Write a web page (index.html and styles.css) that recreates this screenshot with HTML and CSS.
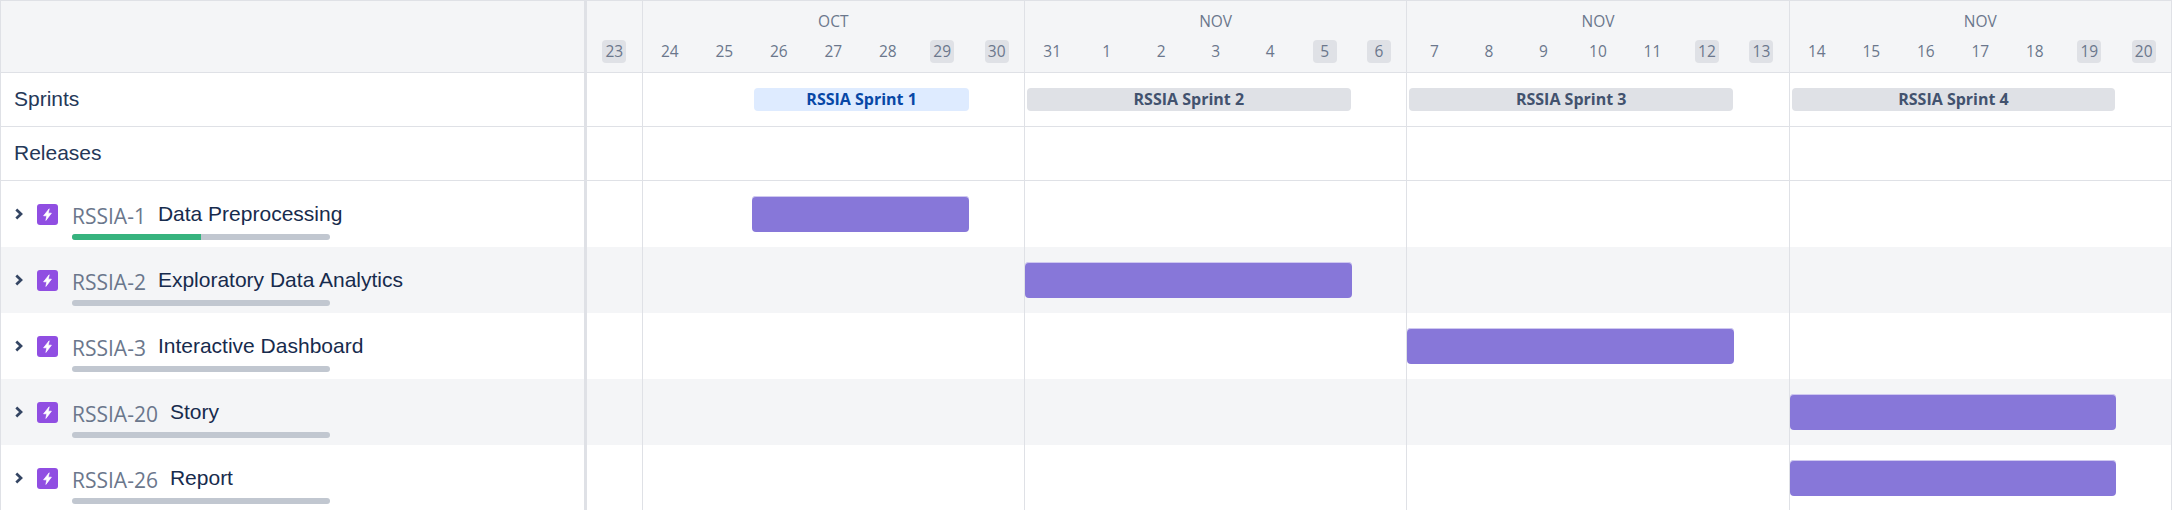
FILE: index.html
```html
<!DOCTYPE html>
<html lang="en">
<head>
    <meta charset="UTF-8">
    <title>Timeline</title>
    <link rel="stylesheet" href="styles.css">
</head>
<body>
    <svg class="defs" width="0" height="0">
        <symbol id="epic" viewBox="0 0 21 21">
            <rect width="21" height="21" rx="3" fill="#904ee2"/>
            <path d="M12.2 4.8 6.6 11.8h3.2L8.9 16.4l5.5-7.2h-3.2z" fill="#fff" stroke="#fff" stroke-width=".7" stroke-linejoin="round"/>
        </symbol>
        <symbol id="chevron" viewBox="0 0 10 12">
            <path d="M2.3 1.6 7 6 2.3 10.4" fill="none" stroke="#344563" stroke-width="2.7"/>
        </symbol>
    </svg>

    <div class="roadmap">
        <!-- Header -->
        <div class="row row-head">
            <div class="side"></div>
            <div class="track">
                <div class="cell first">
                    <div class="month"></div>
                    <div class="days"><span class="day off">23</span></div>
                </div>
                <div class="cell week">
                    <div class="month">OCT</div>
                    <div class="days">
                        <span class="day">24</span><span class="day">25</span><span class="day">26</span><span class="day">27</span><span class="day">28</span><span class="day off">29</span><span class="day off">30</span>
                    </div>
                </div>
                <div class="cell week">
                    <div class="month">NOV</div>
                    <div class="days">
                        <span class="day">31</span><span class="day">1</span><span class="day">2</span><span class="day">3</span><span class="day">4</span><span class="day off">5</span><span class="day off">6</span>
                    </div>
                </div>
                <div class="cell week">
                    <div class="month">NOV</div>
                    <div class="days">
                        <span class="day">7</span><span class="day">8</span><span class="day">9</span><span class="day">10</span><span class="day">11</span><span class="day off">12</span><span class="day off">13</span>
                    </div>
                </div>
                <div class="cell week">
                    <div class="month">NOV</div>
                    <div class="days">
                        <span class="day">14</span><span class="day">15</span><span class="day">16</span><span class="day">17</span><span class="day">18</span><span class="day off">19</span><span class="day off">20</span>
                    </div>
                </div>
            </div>
        </div>

        <!-- Sprints -->
        <div class="row row-meta">
            <div class="side">Sprints</div>
            <div class="track">
                <div class="cell first"></div><div class="cell week"></div><div class="cell week"></div><div class="cell week"></div><div class="cell week"></div>
                <div class="sprint active s1">RSSIA Sprint 1</div>
                <div class="sprint s2">RSSIA Sprint 2</div>
                <div class="sprint s3">RSSIA Sprint 3</div>
                <div class="sprint s4">RSSIA Sprint 4</div>
            </div>
        </div>

        <!-- Releases -->
        <div class="row row-meta">
            <div class="side">Releases</div>
            <div class="track">
                <div class="cell first"></div><div class="cell week"></div><div class="cell week"></div><div class="cell week"></div><div class="cell week"></div>
            </div>
        </div>

        <!-- Epics -->
        <div class="row row-epic">
            <div class="side">
                <svg class="chevron"><use href="#chevron"/></svg>
                <svg class="icon"><use href="#epic"/></svg>
                <div class="info">
                    <div class="names"><span class="key">RSSIA-1</span><span class="title">Data Preprocessing</span></div>
                    <div class="progress"><div class="done" style="width: 50%"></div></div>
                </div>
            </div>
            <div class="track">
                <div class="cell first"></div><div class="cell week"></div><div class="cell week"></div><div class="cell week"></div><div class="cell week"></div>
                <div class="bar b1"></div>
            </div>
        </div>

        <div class="row row-epic alt">
            <div class="side">
                <svg class="chevron"><use href="#chevron"/></svg>
                <svg class="icon"><use href="#epic"/></svg>
                <div class="info">
                    <div class="names"><span class="key">RSSIA-2</span><span class="title">Exploratory Data Analytics</span></div>
                    <div class="progress"></div>
                </div>
            </div>
            <div class="track">
                <div class="cell first"></div><div class="cell week"></div><div class="cell week"></div><div class="cell week"></div><div class="cell week"></div>
                <div class="bar b2"></div>
            </div>
        </div>

        <div class="row row-epic">
            <div class="side">
                <svg class="chevron"><use href="#chevron"/></svg>
                <svg class="icon"><use href="#epic"/></svg>
                <div class="info">
                    <div class="names"><span class="key">RSSIA-3</span><span class="title">Interactive Dashboard</span></div>
                    <div class="progress"></div>
                </div>
            </div>
            <div class="track">
                <div class="cell first"></div><div class="cell week"></div><div class="cell week"></div><div class="cell week"></div><div class="cell week"></div>
                <div class="bar b3"></div>
            </div>
        </div>

        <div class="row row-epic alt">
            <div class="side">
                <svg class="chevron"><use href="#chevron"/></svg>
                <svg class="icon"><use href="#epic"/></svg>
                <div class="info">
                    <div class="names"><span class="key">RSSIA-20</span><span class="title">Story</span></div>
                    <div class="progress"></div>
                </div>
            </div>
            <div class="track">
                <div class="cell first"></div><div class="cell week"></div><div class="cell week"></div><div class="cell week"></div><div class="cell week"></div>
                <div class="bar b4"></div>
            </div>
        </div>

        <div class="row row-epic">
            <div class="side">
                <svg class="chevron"><use href="#chevron"/></svg>
                <svg class="icon"><use href="#epic"/></svg>
                <div class="info">
                    <div class="names"><span class="key">RSSIA-26</span><span class="title">Report</span></div>
                    <div class="progress"></div>
                </div>
            </div>
            <div class="track">
                <div class="cell first"></div><div class="cell week"></div><div class="cell week"></div><div class="cell week"></div><div class="cell week"></div>
                <div class="bar b4"></div>
            </div>
        </div>
    </div>
</body>
</html>
```

FILE: styles.css
```css
html, body {
    margin: 0;
    padding: 0;
    height: 510px;
    overflow: hidden;
    background: #fff;
}

.defs {
    display: block;
    height: 0;
}

.roadmap {
    box-sizing: border-box;
    height: 510px;
    overflow: hidden;
    border-top: 1px solid #dfe1e6;
    border-left: 1px solid #dfe1e6;
    border-right: 1px solid #dfe1e6;
    font-family: "Open Sans", sans-serif;
    color: #172b4d;
}

.row {
    display: flex;
    box-sizing: border-box;
}

.side {
    box-sizing: border-box;
    flex: 0 0 583px;
    display: flex;
    align-items: center;
}

.track {
    flex: 1;
    min-width: 0;
    display: grid;
    grid-template-columns: repeat(29, 1fr);
    grid-template-rows: 1fr;
    border-left: 3px solid #dfe1e6;
}

.cell {
    box-sizing: border-box;
    grid-row: 1;
    min-width: 0;
}

.cell:nth-child(1) { grid-column: 1 / span 1; }
.cell:nth-child(2) { grid-column: 2 / span 7; }
.cell:nth-child(3) { grid-column: 9 / span 7; }
.cell:nth-child(4) { grid-column: 16 / span 7; }
.cell:nth-child(5) { grid-column: 23 / span 7; }

.cell.week {
    border-left: 1px solid #dfe1e6;
}

/* Header */
.row-head {
    height: 72px;
    background: #f4f5f7;
    border-bottom: 1px solid #dfe1e6;
}

.row-head .cell {
    display: flex;
    flex-direction: column;
}

.month {
    height: 39px;
    padding-top: 10px;
    box-sizing: border-box;
    line-height: 20px;
    font-size: 15.5px;
    color: #6b778c;
    text-align: center;
}

.days {
    display: grid;
    grid-auto-flow: column;
    grid-auto-columns: 1fr;
    justify-items: center;
}

.day {
    width: 24px;
    height: 23px;
    line-height: 23px;
    border-radius: 4px;
    font-size: 15.5px;
    color: #6b778c;
    text-align: center;
}

.day.off {
    background: #dfe1e6;
}

/* Sprints and releases */
.row-meta {
    height: 54px;
    border-bottom: 1px solid #dfe1e6;
}

.row-meta .side {
    padding: 0 0 2px 13px;
    font-family: "Liberation Sans", sans-serif;
    font-size: 21px;
    color: #253858;
}

.sprint {
    grid-row: 1;
    align-self: center;
    height: 23px;
    line-height: 23px;
    margin: 0 1px 0 3px;
    border-radius: 4px;
    background: #dfe1e6;
    color: #42526e;
    font-size: 16px;
    font-weight: 700;
    text-align: center;
}

.sprint.active {
    background: #deebff;
    color: #0747a6;
}

.s1 { grid-column: 4 / span 4; margin-right: 0; }
.s2 { grid-column: 9 / span 6; }
.s3 { grid-column: 16 / span 6; }
.s4 { grid-column: 23 / span 6; }

/* Epic rows */
.row-epic {
    height: 66px;
}

.row-epic.alt {
    background: #f4f5f7;
}

.row-epic .side {
    padding-left: 13px;
    align-items: flex-start;
}

.chevron {
    flex: none;
    width: 10px;
    height: 12px;
    margin-top: 27px;
}

.icon {
    flex: none;
    width: 21px;
    height: 21px;
    margin: 23px 0 0 13px;
}

.info {
    margin: 19px 0 0 14px;
}

.names {
    display: flex;
    gap: 12px;
    height: 34px;
    white-space: nowrap;
}

.key {
    font-size: 21px;
    line-height: 32px;
    color: #6b778c;
}

.title {
    font-family: "Liberation Sans", sans-serif;
    font-size: 21px;
    line-height: 28px;
}

.progress {
    width: 258px;
    height: 6px;
    border-radius: 3px;
    overflow: hidden;
    background: #c1c7d0;
}

.done {
    height: 100%;
    background: #36b37e;
}

.bar {
    grid-row: 1;
    align-self: center;
    height: 36px;
    margin-left: 1px;
    border-radius: 4px;
    background: #8777d9;
    box-shadow: inset 0 1px rgba(255, 255, 255, 0.6);
}

.b1 { grid-column: 4 / span 4; }
.b2 { grid-column: 9 / span 6; }
.b3 { grid-column: 16 / span 6; }
.b4 { grid-column: 23 / span 6; }
```
